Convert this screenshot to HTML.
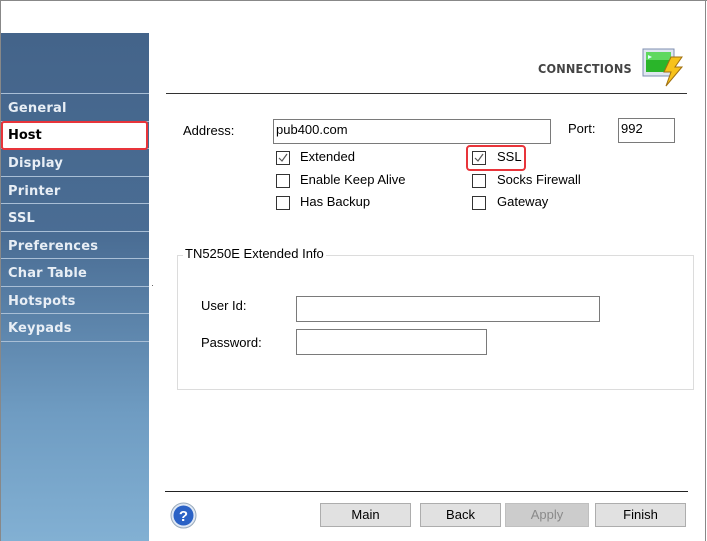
<!DOCTYPE html>
<html><head><style>
body{margin:0;width:707px;height:541px;background:#fff;position:relative;overflow:hidden;font-family:"Liberation Sans",sans-serif;font-size:13px;color:#000}
.a{position:absolute}
.side{left:1px;top:33px;width:148px;height:508px;background:linear-gradient(#44648a 0%,#4a6d94 40%,#6f9cc2 75%,#82b0d3 100%)}
.it{position:absolute;left:1px;width:148px;height:26px;border-top:1.5px solid #a9bfd6;color:#e8eef5;font-weight:bold;font-size:13px;line-height:29px;text-indent:7px;font-family:"DejaVu Sans",sans-serif;letter-spacing:0.2px}
.cb{position:absolute;width:12px;height:12px;border:1px solid #333;background:#fff}
.lbl{position:absolute;font-size:13px}
.inp{position:absolute;border:1px solid #7a7a7a;background:#fff;box-sizing:border-box}
.btn{position:absolute;top:503px;height:24px;background:#e1e1e1;border:1px solid #adadad;box-sizing:border-box;text-align:center;line-height:22px;font-size:13px}
</style></head><body>
<div class="a" style="left:0;top:0;width:707px;height:1px;background:#888"></div>
<div class="a" style="left:0;top:0;width:1px;height:541px;background:#888"></div>
<div class="a" style="left:705px;top:0;width:1px;height:541px;background:#888"></div>
<div class="a side"></div>
<div class="it" style="top:93px">General</div>
<div class="it" style="top:121px">Host</div>
<div class="it" style="top:148px">Display</div>
<div class="it" style="top:176px">Printer</div>
<div class="it" style="top:203px">SSL</div>
<div class="it" style="top:231px">Preferences</div>
<div class="it" style="top:258px">Char Table</div>
<div class="it" style="top:286px">Hotspots</div>
<div class="it" style="top:313px">Keypads</div>
<div class="it" style="top:341px;height:0"></div>
<div class="a" style="left:1px;top:121px;width:147px;height:29px;background:#fff;border:2.5px solid #e8343a;box-sizing:border-box;border-radius:3px;font-weight:bold;font-size:13px;line-height:26px;text-indent:5px;font-family:'DejaVu Sans',sans-serif">Host</div>

<div class="a" style="left:538px;top:62px;font-size:12px;font-weight:bold;color:#444;letter-spacing:0.2px;font-family:'DejaVu Sans',sans-serif;transform:scaleX(0.94);transform-origin:left">CONNECTIONS</div>
<svg class="a" style="left:642px;top:46px" width="44" height="42" viewBox="0 0 44 42">
<rect x="1" y="3" width="31" height="27" fill="#dfe6f0" stroke="#7f8fb0"/>
<rect x="4" y="6" width="25" height="20" fill="#2ab52a"/>
<rect x="4" y="6" width="25" height="8" fill="#5fd85f"/>
<polygon points="6,9 10,11 6,13" fill="#dff"/>
<polygon points="29,11 40,11 33,21 40,21 24,40 29,26 22,26" fill="#f7c21a" stroke="#a07010" stroke-width="1"/>
</svg>
<div class="a" style="left:166px;top:93px;width:521px;height:1px;background:#333"></div>

<div class="lbl" style="left:183px;top:123px">Address:</div>
<div class="inp" style="left:273px;top:119px;width:278px;height:25px;padding:2px 2px">pub400.com</div>
<div class="lbl" style="left:568px;top:121px">Port:</div>
<div class="inp" style="left:618px;top:118px;width:57px;height:25px;padding:2px 2px">992</div>

<div class="cb" style="left:276px;top:151px"></div><div class="lbl" style="left:300px;top:149px">Extended</div>
<div class="cb" style="left:276px;top:174px"></div><div class="lbl" style="left:300px;top:172px">Enable Keep Alive</div>
<div class="cb" style="left:276px;top:196px"></div><div class="lbl" style="left:300px;top:194px">Has Backup</div>
<div class="cb" style="left:472px;top:151px"></div><div class="lbl" style="left:497px;top:149px">SSL</div>
<div class="cb" style="left:472px;top:174px"></div><div class="lbl" style="left:497px;top:172px">Socks Firewall</div>
<div class="cb" style="left:472px;top:196px"></div><div class="lbl" style="left:497px;top:194px">Gateway</div>
<svg class="a" style="left:276px;top:151px" width="14" height="14"><path d="M3 7 L6 10 L11 3" stroke="#555" stroke-width="1.2" fill="none"/></svg>
<svg class="a" style="left:472px;top:151px" width="14" height="14"><path d="M3 7 L6 10 L11 3" stroke="#555" stroke-width="1.2" fill="none"/></svg>
<div class="a" style="left:466px;top:145px;width:60px;height:26px;border:2.5px solid #e8343a;border-radius:4px;box-sizing:border-box"></div>

<div class="a" style="left:177px;top:255px;width:517px;height:135px;border:1px solid #dcdcdc;box-sizing:border-box"></div>
<div class="a" style="left:183px;top:246px;background:#fff;padding:0 2px;font-size:13px">TN5250E Extended Info</div>
<div class="lbl" style="left:201px;top:298px">User Id:</div>
<div class="inp" style="left:296px;top:296px;width:304px;height:26px"></div>
<div class="lbl" style="left:201px;top:335px">Password:</div>
<div class="inp" style="left:296px;top:329px;width:191px;height:26px"></div>
<div class="a" style="left:152px;top:285px;width:1px;height:1px;background:#666"></div>

<div class="a" style="left:165px;top:491px;width:523px;height:1px;background:#222"></div>
<svg class="a" style="left:170px;top:502px" width="27" height="27" viewBox="0 0 27 27">
<circle cx="13.5" cy="13.5" r="12.5" fill="#dfe8f5" stroke="#9ab"/>
<circle cx="13.5" cy="13.5" r="10" fill="#2b62c6"/>
<text x="13.5" y="19" text-anchor="middle" font-size="15" font-weight="bold" fill="#fff" font-family="Liberation Sans,sans-serif">?</text>
</svg>
<div class="btn" style="left:320px;width:91px">Main</div>
<div class="btn" style="left:420px;width:81px">Back</div>
<div class="btn" style="left:505px;width:84px;background:#ccc;border-color:#bfbfbf;color:#8a8a8a">Apply</div>
<div class="btn" style="left:595px;width:91px">Finish</div>
</body></html>
